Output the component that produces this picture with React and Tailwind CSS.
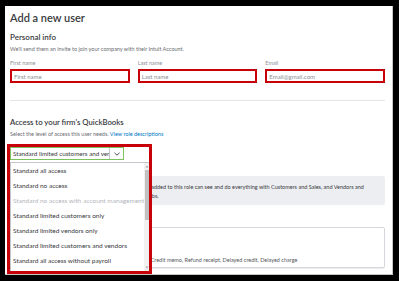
import React from "react"

const roles = [
  { label: "Standard all access" },
  { label: "Standard no access" },
  { label: "Standard no access with account management", disabled: true },
  { label: "Standard limited customers only" },
  { label: "Standard limited vendors only" },
  { label: "Standard limited customers and vendors" },
  { label: "Standard all access without payroll" },
]

function Field({ label, placeholder }) {
  return (
    <div className="flex-1">
      <div className="text-[5.5px] leading-[8px] text-[#8d9096]">{label}</div>
      <div className="mt-[2px] h-[14px] border-2 border-[#c8000a] bg-white flex items-center px-[2px]">
        <span className="text-[6px] text-[#8d9096]">{placeholder}</span>
      </div>
    </div>
  )
}

function RoleSelect() {
  return (
    <div className="relative w-[114px]">
      <div className="h-[13px] border-[1.5px] border-[#7cc35f] bg-white flex items-center">
        <span className="flex-1 pl-[2px] text-[6.25px] text-[#393a3d] whitespace-nowrap overflow-hidden">
          Standard limited customers and vendors
        </span>
        <span className="w-[14px] h-full border-l border-[#c4c6cb] flex items-center justify-center">
          <svg width="6" height="4" viewBox="0 0 6 4">
            <path d="M0.5 0.8 L3 3.2 L5.5 0.8" fill="none" stroke="#393a3d" strokeWidth="0.9" />
          </svg>
        </span>
      </div>

      {/* open list */}
      <div className="absolute left-0 top-[15px] w-[140px] h-[110px] bg-white border border-[#c4c6cb] flex z-10">
        <ul className="flex-1">
          {roles.map((r) => (
            <li
              key={r.label}
              className={
                "h-[15px] flex items-center pl-[2px] text-[6.5px] whitespace-nowrap " +
                (r.disabled ? "text-[#b3b6bb]" : "text-[#393a3d]")
              }
            >
              {r.label}
            </li>
          ))}
        </ul>
        <div className="w-[6px] bg-[#f1f1f1] flex flex-col items-center">
          <svg width="4" height="5" viewBox="0 0 4 5" className="mt-[1px]">
            <path d="M0.5 3.5 L2 1.5 L3.5 3.5 Z" fill="#a3a3a3" />
          </svg>
          <div className="mt-[1px] w-[4px] h-[50px] bg-[#c1c1c1]" />
          <div className="flex-1" />
          <svg width="4" height="5" viewBox="0 0 4 5" className="mb-[1px]">
            <path d="M0.5 1.5 L2 3.5 L3.5 1.5 Z" fill="#a3a3a3" />
          </svg>
        </div>
      </div>

      {/* annotation outline */}
      <div className="absolute -left-[3px] -top-[3px] w-[145px] h-[130px] border-[3px] border-[#c8000a] z-20 pointer-events-none" />
    </div>
  )
}

export default function App() {
  return (
    <div className="w-[399px] h-[281px] bg-black pt-[6px] pl-[5px] overflow-hidden font-['Lato',sans-serif]">
      <div className="relative w-[388px] h-[269px] bg-white border-r border-b border-[#c6c6c6] pl-[5px] pr-[7px] pt-[4px] overflow-hidden">
        <h1 className="text-[11px] leading-[16px] font-semibold text-[#393a3d]">Add a new user</h1>

        <h2 className="mt-[5px] text-[8px] leading-[12px] font-semibold text-[#393a3d]">Personal info</h2>
        <p className="mt-[2px] text-[5.5px] leading-[8px] text-[#6b6c72]">
          We'll send them an invite to join your company with their Intuit Account.
        </p>

        <div className="mt-[6px] flex gap-[8px]">
          <Field label="First name" placeholder="First name" />
          <Field label="Last name" placeholder="Last name" />
          <Field label="Email" placeholder="Email@gmail.com" />
        </div>

        <div className="mt-[17px] h-px bg-[#e3e5e8]" />

        <h2 className="mt-[15px] text-[7.75px] leading-[12px] font-semibold text-[#393a3d]">
          Access to your firm's QuickBooks
        </h2>
        <p className="mt-[2px] text-[5.5px] leading-[8px] text-[#6b6c72]">
          Select the level of access this user needs. <span className="text-[#0077c5]">View role descriptions</span>
        </p>

        <div className="mt-[9px]">
          <RoleSelect />
        </div>

        <div className="mt-[16px] h-[29px] bg-[#eceef1] rounded-[2px] px-[10px] pt-[7px] text-[5.5px] leading-[9px] text-[#393a3d]">
          <div className="whitespace-nowrap">Standard limited customers and vendors access: Users added to this role can see and do everything with Customers and Sales, and Vendors and</div>
          <div className="whitespace-nowrap">Expenses. They can't see Banking, Payroll or Reports tabs.</div>
        </div>

        <div className="mt-[22px] h-[41px] border border-[#d4d7dc] rounded-[2px] shadow-[0_1px_1px_rgba(0,0,0,0.08)] px-[10px] pt-[6px] text-[#393a3d]">
          <div className="font-semibold text-[6.5px] leading-[10px]">Customers and Sales</div>
          <div className="mt-[12px] text-[5.5px] leading-[8px] text-[#55575d] whitespace-nowrap">
            Invoices, Receive payments, Estimates, Sales receipts, Credit memo, Refund receipt, Delayed credit, Delayed charge
          </div>
        </div>
      </div>
    </div>
  )
}
